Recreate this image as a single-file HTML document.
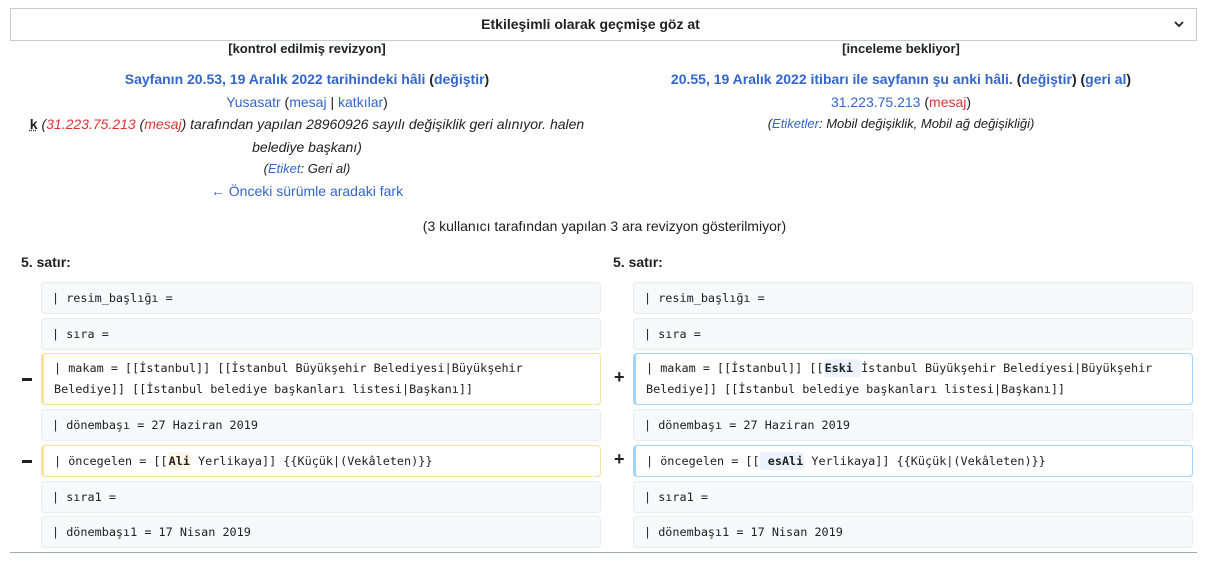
<!DOCTYPE html>
<html><head><meta charset="utf-8"><style>
*{margin:0;padding:0;box-sizing:border-box}
body{width:1209px;height:563px;background:#fff;font-family:"Liberation Sans",Arial,sans-serif;font-size:14px;color:#202122;position:relative;overflow:hidden}
.a{position:absolute}
.hdr{left:10px;top:8px;width:1187px;height:33px;border:1px solid #c8ccd1;text-align:center;font-weight:bold;line-height:31px;padding-right:26px}
.col{position:absolute;text-align:center;line-height:22.4px;font-size:14px}
.b{color:#3366cc}.r{color:#d33}
.it{font-style:italic;font-size:13px}
.box{position:absolute;height:32px;background:#f8f9fa;border:1px solid #eaecf0;border-radius:4px;font-family:"DejaVu Sans Mono","Liberation Mono",monospace;font-size:11.8px;padding:0 10px;line-height:30px;white-space:pre;color:#202122}
.del{border:1px solid #fde29b;border-left:3px solid #fde29b;background:#fff}
.add{border:1px solid #a3d3ff;border-left:3px solid #a3d3ff;background:#fff}
.tall{height:52px;line-height:21px;padding-top:4px}
.hd{background:#fef6e7;font-weight:bold;border-radius:3px;padding:2px 1px}
.ha{background:#eaf3ff;font-weight:bold;border-radius:3px;padding:2px 1px}
.sign{position:absolute;font-weight:bold;font-size:18px}
</style></head><body>
<div class="a hdr">Etkileşimli olarak geçmişe göz at</div>
<svg class="a" style="left:1173px;top:18px" width="12" height="12" viewBox="0 0 12 12"><path d="M2 4l4 4 4-4" stroke="#202122" stroke-width="1.8" fill="none"/></svg>

<div class="col" style="left:10px;width:594px;top:38px">
<div style="font-weight:bold;font-size:13px">[kontrol edilmiş revizyon]</div>
<div style="margin-top:8px;font-weight:bold" class="b">Sayfanın 20.53, 19 Aralık 2022 tarihindeki hâli <span style="color:#202122">(</span>değiştir<span style="color:#202122">)</span></div>
<div><span class="b">Yusasatr</span> (<span class="b">mesaj</span> | <span class="b">katkılar</span>)</div>
<div class="it" style="padding:0 12px;font-size:14px"><b style="font-style:normal;text-decoration:underline dotted">k</b> (<span class="r">31.223.75.213</span> (<span class="r">mesaj</span>) tarafından yapılan 28960926 sayılı değişiklik geri alınıyor. halen belediye başkanı)</div>
<div class="it">(<span class="b">Etiket</span>: Geri al)</div>
<div class="b">← Önceki sürümle aradaki fark</div>
</div>

<div class="col" style="left:604px;width:594px;top:38px">
<div style="font-weight:bold;font-size:13px">[inceleme bekliyor]</div>
<div style="margin-top:8px;font-weight:bold" class="b">20.55, 19 Aralık 2022 itibarı ile sayfanın şu anki hâli. <span style="color:#202122">(</span>değiştir<span style="color:#202122">)</span> <span style="color:#202122">(</span>geri al<span style="color:#202122">)</span></div>
<div><span class="b">31.223.75.213</span> (<span class="r">mesaj</span>)</div>
<div class="it">(<span class="b">Etiketler</span>: Mobil değişiklik, Mobil ağ değişikliği)</div>
</div>

<div class="a" style="left:0;width:1209px;top:218px;text-align:center;font-size:14px">(3 kullanıcı tarafından yapılan 3 ara revizyon gösterilmiyor)</div>
<div class="a" style="left:21px;top:254px;font-weight:bold;font-size:14px">5. satır:</div>
<div class="a" style="left:613px;top:254px;font-weight:bold;font-size:14px">5. satır:</div>

<div class="box" style="left:41px;top:282px;width:560px">| resim_başlığı =</div>
<div class="box" style="left:41px;top:318px;width:560px">| sıra =</div>
<div class="box del tall" style="left:41px;top:353px;width:560px">| makam = [[İstanbul]] [[İstanbul Büyükşehir Belediyesi|Büyükşehir
Belediye]] [[İstanbul belediye başkanları listesi|Başkanı]]</div>
<div class="box" style="left:41px;top:409px;width:560px">| dönembaşı = 27 Haziran 2019</div>
<div class="box del" style="left:41px;top:445px;width:560px">| öncegelen = [[<span class="hd">Ali</span> Yerlikaya]] {{Küçük|(Vekâleten)}}</div>
<div class="box" style="left:41px;top:481px;width:560px">| sıra1 =</div>
<div class="box" style="left:41px;top:516px;width:560px">| dönembaşı1 = 17 Nisan 2019</div>

<div class="box" style="left:633px;top:282px;width:560px">| resim_başlığı =</div>
<div class="box" style="left:633px;top:318px;width:560px">| sıra =</div>
<div class="box add tall" style="left:633px;top:353px;width:560px">| makam = [[İstanbul]] [[<span class="ha">Eski </span>İstanbul Büyükşehir Belediyesi|Büyükşehir
Belediye]] [[İstanbul belediye başkanları listesi|Başkanı]]</div>
<div class="box" style="left:633px;top:409px;width:560px">| dönembaşı = 27 Haziran 2019</div>
<div class="box add" style="left:633px;top:445px;width:560px">| öncegelen = [[<span class="ha"> esAli</span> Yerlikaya]] {{Küçük|(Vekâleten)}}</div>
<div class="box" style="left:633px;top:481px;width:560px">| sıra1 =</div>
<div class="box" style="left:633px;top:516px;width:560px">| dönembaşı1 = 17 Nisan 2019</div>

<div class="a" style="left:22px;top:378px;width:10px;height:3px;background:#202122"></div>
<div class="a" style="left:22px;top:460px;width:10px;height:3px;background:#202122"></div>
<div class="sign" style="left:614px;top:367px">+</div>
<div class="sign" style="left:614px;top:449px">+</div>

<div class="a" style="left:10px;top:552px;width:1187px;height:1px;background:#a2a9b1"></div>
</body></html>
